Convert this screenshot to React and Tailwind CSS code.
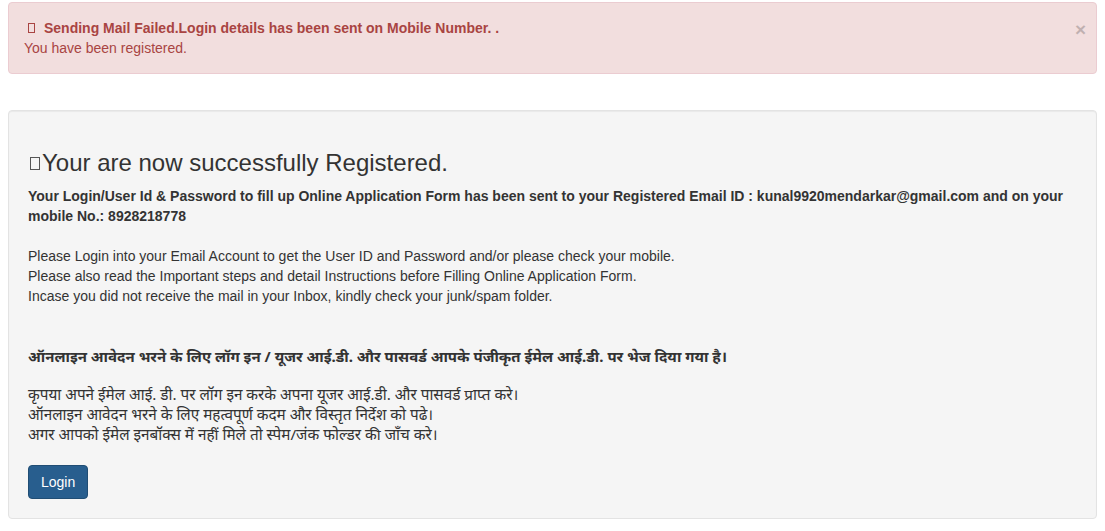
export default function App() {
  return (
    <div className="min-h-[531px] bg-white px-2 pt-[2px] text-[14px] leading-[20px] text-[#333333]" style={{ fontFamily: '"Liberation Sans", Arial, sans-serif' }}>
      <div className="relative rounded-[4px] border border-[#ebccd1] bg-[#f2dede] p-[15px] pr-[35px] text-[#a94442]">
        <div className="flex items-center font-bold">
          <span className="mr-[9px] ml-[4px] inline-block h-[10px] w-[7px] border border-[#a94442]"></span>
          <span>Sending Mail Failed.Login details has been sent on Mobile Number. .</span>
        </div>
        <div>You have been registered.</div>
        <span className="absolute top-[17px] right-[10px] text-[19px] font-bold leading-[20px] text-black opacity-20">×</span>
      </div>

      <div className="mt-[36px] rounded-[4px] border border-[#e3e3e3] bg-[#f5f5f5] px-[19px] pt-[19px] pb-[19px] shadow-[inset_0_1px_1px_rgba(0,0,0,0.05)]">
        <h3 className="mt-[20px] mb-[10px] flex items-center text-[24px] leading-[26.4px] text-[#333333]">
          <span className="mr-[2px] ml-[2px] inline-block h-[13px] w-[10px] border border-[#555]"></span>
          <span>Your are now successfully Registered.</span>
        </h3>
        <p className="font-bold">
          Your Login/User Id &amp; Password to fill up Online Application Form has been sent to your Registered Email ID : kunal9920mendarkar@gmail.com and on your mobile No.: 8928218778
        </p>
        <p className="mt-[20px]">
          Please Login into your Email Account to get the User ID and Password and/or please check your mobile.
          <br />
          Please also read the Important steps and detail Instructions before Filling Online Application Form.
          <br />
          Incase you did not receive the mail in your Inbox, kindly check your junk/spam folder.
        </p>
        <p className="mt-[40px] text-[15px] font-bold" style={{ fontFamily: '"Noto Sans", "Liberation Sans", sans-serif' }}>
          ऑनलाइन आवेदन भरने के लिए लॉग इन / यूजर आई.डी. और पासवर्ड आपके पंजीकृत ईमेल आई.डी. पर भेज दिया गया है।
        </p>
        <p className="mt-[18px] text-[15.3px]" style={{ fontFamily: '"Noto Sans", "Liberation Sans", sans-serif' }}>
          कृपया अपने ईमेल आई. डी. पर लॉग इन करके अपना यूजर आई.डी. और पासवर्ड प्राप्त करे।
          <br />
          ऑनलाइन आवेदन भरने के लिए महत्वपूर्ण कदम और विस्तृत निर्देश को पढे।
          <br />
          अगर आपको ईमेल इनबॉक्स में नहीं मिले तो स्पेम/जंक फोल्डर की जाँच करे।
        </p>
        <button className="mt-[21px] rounded-[4px] border border-[#204d74] bg-[#285e8e] px-[12px] py-[6px] text-[14px] leading-[20px] text-white">
          Login
        </button>
      </div>
    </div>
  );
}
